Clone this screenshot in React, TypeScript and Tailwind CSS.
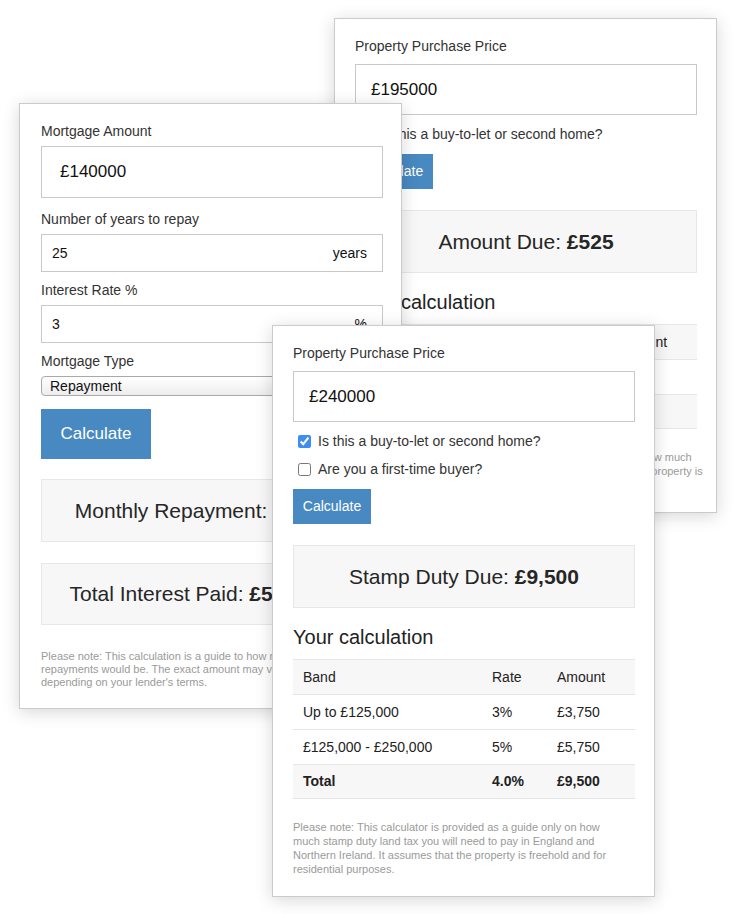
import React from 'react';

type Row = { band: string; rate: string; amount: string };

const cardCls =
  'absolute w-[383px] bg-white border border-[#cbcbcb] shadow-[0_3px_16px_rgba(0,0,0,0.16)]';

const ResultBox = ({ label, value, className }: { label: string; value: string; className: string }) => (
  <div className={`flex items-center justify-center bg-[#f7f7f7] border border-[#e7e7e7] text-[21px] text-[#262626] ${className}`}>
    <span className="whitespace-nowrap">
      {label} <b className="font-bold">{value}</b>
    </span>
  </div>
);

const StampCard = ({
  className,
  price,
  firstTime,
  due,
  dueLabel,
  rows,
  total,
  note,
}: {
  className: string;
  price: string;
  firstTime: boolean;
  due: string;
  dueLabel: string;
  rows: Row[];
  total: Row;
  note: string[];
}) => (
  <div className={`${cardCls} ${className} pt-[19px] pl-[20px] pr-[20px]`}>
    <label className="block h-4 leading-4 text-[14px] text-[#333]">Property Purchase Price</label>
    <input
      defaultValue={price}
      className="mt-[10px] block w-[342px] h-[51px] border border-[#c9c9c9] px-[15px] text-[17px] text-[#111] outline-none"
    />
    <label className="mt-[9px] flex h-5 items-center gap-[7px] pl-[5px] text-[14px] text-[#333]">
      <input type="checkbox" defaultChecked className="m-0 h-[13px] w-[13px] accent-[#3d8ef0]" />
      Is this a buy-to-let or second home?
    </label>
    {firstTime && (
      <label className="mt-[8px] flex h-5 items-center gap-[7px] pl-[5px] text-[14px] text-[#333]">
        <input type="checkbox" className="m-0 h-[13px] w-[13px]" />
        Are you a first-time buyer?
      </label>
    )}
    <button className="mt-[10px] block w-[78px] h-[35px] bg-[#4889c1] text-[14px] text-white">Calculate</button>
    <ResultBox label={dueLabel} value={due} className="mt-[21px] w-[342px] h-[63px]" />
    <h2 className="mt-[17px] h-6 leading-6 text-[20px] text-[#222]">Your calculation</h2>
    <div className="mt-[10px] w-[342px] text-[14px] text-[#222]">
      <div className="grid grid-cols-[199px_65px_1fr] h-[35px] items-center bg-[#f7f7f7] border-t border-[#e6e6e6]">
        <span className="pl-[10px]">Band</span>
        <span>Rate</span>
        <span>Amount</span>
      </div>
      {rows.map((r) => (
        <div key={r.band} className="grid grid-cols-[199px_65px_1fr] h-[35px] items-center border-t border-[#e6e6e6]">
          <span className="pl-[10px]">{r.band}</span>
          <span>{r.rate}</span>
          <span>{r.amount}</span>
        </div>
      ))}
      <div className="grid grid-cols-[199px_65px_1fr] h-[35px] items-center bg-[#f7f7f7] border-y border-[#e6e6e6] font-bold">
        <span className="pl-[10px]">{total.band}</span>
        <span>{total.rate}</span>
        <span>{total.amount}</span>
      </div>
    </div>
    <p className="mt-[21px] pb-[20px] text-[11px] leading-[14px] text-[#9a9a9a]">
      {note.map((line) => (
        <span key={line} className="block whitespace-nowrap">
          {line}
        </span>
      ))}
    </p>
  </div>
);

const MortgageCard = () => (
  <div className={`${cardCls} left-[19px] top-[103px] h-[606px] pt-[19px] pl-[21px] pr-[20px]`}>
    <label className="block h-4 leading-4 text-[14px] text-[#333]">Mortgage Amount</label>
    <input
      defaultValue="£140000"
      className="mt-[7px] block w-[342px] h-[52px] border border-[#c9c9c9] px-[18px] text-[17px] text-[#111] outline-none"
    />
    <label className="mt-[13px] block h-4 leading-4 text-[14px] text-[#333]">Number of years to repay</label>
    <div className="mt-[7px] flex w-[342px] h-[38px] items-center border border-[#c9c9c9] pl-[10px] pr-[15px] text-[14px] text-[#111]">
      <input defaultValue="25" className="flex-1 min-w-0 outline-none" />
      <span>years</span>
    </div>
    <label className="mt-[10px] block h-4 leading-4 text-[14px] text-[#333]">Interest Rate %</label>
    <div className="mt-[7px] flex w-[342px] h-[38px] items-center border border-[#c9c9c9] pl-[10px] pr-[15px] text-[14px] text-[#111]">
      <input defaultValue="3" className="flex-1 min-w-0 outline-none" />
      <span>%</span>
    </div>
    <label className="mt-[10px] block h-4 leading-4 text-[14px] text-[#333]">Mortgage Type</label>
    <select className="mt-[7px] block w-[342px] h-[20px] appearance-none rounded-[4px] border border-[#a9a9a9] bg-gradient-to-b from-white to-[#ededed] pl-[8px] text-[14px] leading-[18px] text-[#111]">
      <option>Repayment</option>
      <option>Interest Only</option>
    </select>
    <button className="mt-[13px] block w-[110px] h-[50px] bg-[#4889c1] text-[17px] text-white">Calculate</button>
    <ResultBox label="Monthly Repayment:" value="£663.89" className="mt-[20px] w-[342px] h-[63px]" />
    <ResultBox label="Total Interest Paid:" value="£59,167.00" className="mt-[21px] w-[342px] h-[62px]" />
    <p className="mt-[25px] text-[11px] leading-[13px] text-[#9a9a9a]">
      <span className="block whitespace-nowrap">Please note: This calculation is a guide to how much your monthly</span>
      <span className="block whitespace-nowrap">repayments would be. The exact amount may vary slightly</span>
      <span className="block whitespace-nowrap">depending on your lender's terms.</span>
    </p>
  </div>
);

export default function App() {
  return (
    <div className="relative w-[737px] h-[914px] overflow-hidden bg-white font-['Liberation_Sans',Arial,sans-serif]">
      <StampCard
        className="left-[334px] top-[18px]"
        price="£195000"
        firstTime={false}
        dueLabel="Amount Due:"
        due="£525"
        rows={[{ band: '£125,000 - £195,000', rate: '0.75%', amount: '£525' }]}
        total={{ band: 'Total', rate: '0.3%', amount: '£525' }}
        note={[
          'Please note: This calculator is provided as a guide only on how much',
          'stamp duty land tax you will need to pay. It assumes that the property is',
          'freehold and for residential purposes.',
        ]}
      />
      <MortgageCard />
      <StampCard
        className="left-[272px] top-[325px]"
        price="£240000"
        firstTime
        dueLabel="Stamp Duty Due:"
        due="£9,500"
        rows={[
          { band: 'Up to £125,000', rate: '3%', amount: '£3,750' },
          { band: '£125,000 - £250,000', rate: '5%', amount: '£5,750' },
        ]}
        total={{ band: 'Total', rate: '4.0%', amount: '£9,500' }}
        note={[
          'Please note: This calculator is provided as a guide only on how',
          'much stamp duty land tax you will need to pay in England and',
          'Northern Ireland. It assumes that the property is freehold and for',
          'residential purposes.',
        ]}
      />
    </div>
  );
}
